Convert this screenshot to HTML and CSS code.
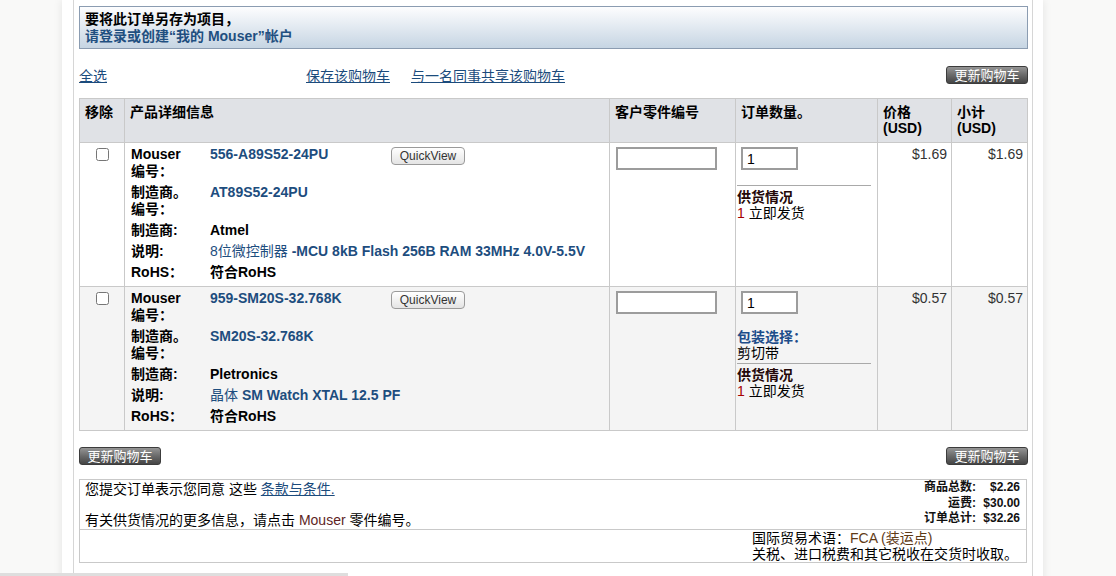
FILE: index.html
```html
<!DOCTYPE html>
<html>

<head>
  <meta charset="utf-8">
  <meta name="viewport" content="width=device-width, initial-scale=1.0">
  <link rel="stylesheet" href="styles.css">
</head>

<body>
  <div class="page">
    <div class="inner">

      <!-- Save as project notice -->
      <div class="notice">
        <div class="notice-title">要将此订单另存为项目，</div>
        <a class="notice-link" href="#">请登录或创建“我的 Mouser”帐户</a>
      </div>

      <div class="toolbar">
        <a class="link" href="#">全选</a>
        <a class="link save-link" href="#">保存该购物车</a>
        <a class="link share-link" href="#">与一名同事共享该购物车</a>
        <button class="btn-update push-right">更新购物车</button>
      </div>

      <!-- Cart table -->
      <table class="cart">
        <colgroup>
          <col class="c-remove">
          <col class="c-details">
          <col class="c-custpn">
          <col class="c-qty">
          <col class="c-price">
          <col class="c-sub">
        </colgroup>
        <thead>
          <tr>
            <th>移除</th>
            <th>产品详细信息</th>
            <th>客户零件编号</th>
            <th>订单数量。</th>
            <th>价格<br>(USD)</th>
            <th>小计<br>(USD)</th>
          </tr>
        </thead>
        <tbody>
          <tr>
            <td class="remove"><input type="checkbox"></td>
            <td>
              <div class="details">
                <div class="drow">
                  <div class="dlabel">Mouser<br>编号：</div>
                  <div class="dvalue"><a class="pn" href="#">556-A89S52-24PU</a><button class="qv">QuickView</button></div>
                </div>
                <div class="drow">
                  <div class="dlabel">制造商。<br>编号：</div>
                  <div class="dvalue"><a class="pn" href="#">AT89S52-24PU</a></div>
                </div>
                <div class="drow">
                  <div class="dlabel">制造商:</div>
                  <div class="dvalue">Atmel</div>
                </div>
                <div class="drow">
                  <div class="dlabel">说明:</div>
                  <div class="dvalue"><a class="desc" href="#"><span class="cjk">8位微控制器</span> -MCU 8kB Flash 256B RAM 33MHz 4.0V-5.5V</a></div>
                </div>
                <div class="drow">
                  <div class="dlabel">RoHS：</div>
                  <div class="dvalue">符合RoHS</div>
                </div>
              </div>
            </td>
            <td class="custpn"><input class="txt txt-cust" type="text"></td>
            <td class="qty">
              <input class="txt txt-qty" type="text" value="1">
              <div class="avail">
                <div class="avail-title">供货情况</div>
                <div><span class="stock">1</span> 立即发货</div>
              </div>
            </td>
            <td class="money">$1.69</td>
            <td class="money">$1.69</td>
          </tr>
          <tr class="alt">
            <td class="remove"><input type="checkbox"></td>
            <td>
              <div class="details">
                <div class="drow">
                  <div class="dlabel">Mouser<br>编号：</div>
                  <div class="dvalue"><a class="pn" href="#">959-SM20S-32.768K</a><button class="qv">QuickView</button></div>
                </div>
                <div class="drow">
                  <div class="dlabel">制造商。<br>编号：</div>
                  <div class="dvalue"><a class="pn" href="#">SM20S-32.768K</a></div>
                </div>
                <div class="drow">
                  <div class="dlabel">制造商:</div>
                  <div class="dvalue">Pletronics</div>
                </div>
                <div class="drow">
                  <div class="dlabel">说明:</div>
                  <div class="dvalue"><a class="desc" href="#"><span class="cjk">晶体</span> SM Watch XTAL 12.5 PF</a></div>
                </div>
                <div class="drow">
                  <div class="dlabel">RoHS：</div>
                  <div class="dvalue">符合RoHS</div>
                </div>
              </div>
            </td>
            <td class="custpn"><input class="txt txt-cust" type="text"></td>
            <td class="qty">
              <input class="txt txt-qty" type="text" value="1">
              <div class="packaging">
                <div class="pack-title">包装选择：</div>
                <div>剪切带</div>
              </div>
              <div class="avail">
                <div class="avail-title">供货情况</div>
                <div><span class="stock">1</span> 立即发货</div>
              </div>
            </td>
            <td class="money">$0.57</td>
            <td class="money">$0.57</td>
          </tr>
        </tbody>
      </table>

      <div class="toolbar bottom-bar">
        <button class="btn-update">更新购物车</button>
        <button class="btn-update push-right">更新购物车</button>
      </div>

      <!-- Summary -->
      <table class="summary">
        <tr>
          <td class="terms">
            您提交订单表示您同意 这些 <a class="link" href="#">条款与条件.</a><br><br>
            有关供货情况的更多信息，请点击 <span class="mouser">Mouser</span> 零件编号。
          </td>
          <td class="totals-cell">
            <div class="totals">
              <span>商品总数:</span><span>$2.26</span>
              <span>运费:</span><span>$30.00</span>
              <span>订单总计:</span><span>$32.26</span>
            </div>
          </td>
        </tr>
        <tr class="incoterm-row">
          <td></td>
          <td class="incoterm">
            国际贸易术语：<span class="fca">FCA (装运点)</span><br>
            关税、进口税费和其它税收在交货时收取。
          </td>
        </tr>
      </table>

    </div>
  </div>

  <div class="hscroll"></div>
</body>

</html>
```

FILE: styles.css
```css
/* Page frame */
body {
  font-family: "Liberation Sans", "Noto Sans CJK SC", sans-serif;
  font-size: 14px;
  margin: 0;
  background-color: #f9f9f8;
  color: #000;
  overflow: hidden;
}

.page {
  width: 981px;
  margin-left: 62px;
  min-height: 600px;
  background-color: #fff;
  box-shadow: 0 0 9px rgba(0, 0, 0, 0.09);
}

.inner {
  margin: 0 10px 0 11px;
  padding: 6px 4px 0 5px;
  min-height: 600px;
  border-left: 1px solid #d6d6d6;
  border-right: 1px solid #d6d6d6;
}

a {
  text-decoration: none;
}

.link {
  color: #1b4b7c;
  text-decoration: underline;
}

/* Notice box */
.notice {
  border: 1px solid #8b9cb1;
  background: linear-gradient(#fdfdfe, #c6d5e3);
  padding: 4px 5px 3px;
  line-height: 17px;
  font-weight: bold;
}

.notice-link {
  color: #1f4f80;
}

/* Toolbars */
.toolbar {
  display: flex;
  align-items: center;
  height: 18px;
  margin: 17px 0 14px;
}

.save-link {
  margin-left: 199px;
}

.share-link {
  margin-left: 21px;
}

.push-right {
  margin-left: auto;
}

.bottom-bar {
  margin: 16px 0 14px;
}

.btn-update {
  width: 82px;
  height: 18px;
  padding: 0;
  border: 1px solid #3c3c3c;
  border-radius: 3px;
  background: linear-gradient(#959595, #6a6a6a 50%, #454545);
  color: #fff;
  font-family: "Noto Sans CJK SC", sans-serif;
  font-size: 13px;
  line-height: 16px;
  cursor: pointer;
}

/* Cart table */
.cart {
  width: 948px;
  border-collapse: collapse;
  table-layout: fixed;
}

.c-remove { width: 45px; }
.c-details { width: 485px; }
.c-custpn { width: 126px; }
.c-qty { width: 142px; }
.c-price { width: 74px; }
.c-sub { width: 76px; }

.cart th,
.cart td {
  border: 1px solid #c9c9c9;
  vertical-align: top;
}

.cart th {
  background-color: #e0e2e6;
  text-align: left;
  font-weight: bold;
  line-height: 16px;
  padding: 5px 5px 6px;
}

.cart td {
  padding: 3px 4px 3px 6px;
  line-height: 17px;
}

.cart tr.alt td {
  background-color: #f4f4f4;
}

.remove {
  text-align: center;
}

.remove input {
  margin: 2px 2px 0 0;
  width: 13px;
  height: 13px;
}

.details {
  margin-top: -2px;
  font-weight: bold;
}

.drow {
  display: flex;
  padding: 2px 0;
}

.dlabel {
  width: 79px;
  flex: none;
}

.pn,
.desc {
  color: #1d4d7e;
}

.pn {
  display: inline-block;
  width: 181px;
}

.cjk {
  font-weight: normal;
}

.qv {
  vertical-align: top;
  margin-top: 1px;
  width: 74px;
  height: 18px;
  padding: 0;
  border: 1px solid #9a9a9a;
  border-radius: 4px;
  background: linear-gradient(#ffffff, #e4e4e4);
  color: #333;
  font-family: "Liberation Sans", sans-serif;
  font-size: 12px;
  font-weight: normal;
}

.custpn {
  padding-left: 5px;
}

.txt {
  display: block;
  height: 23px;
  box-sizing: border-box;
  margin: 1px 0 0 0;
  border: 2px solid #9c9c9c;
  padding: 0 4px;
  font-family: "Liberation Sans", sans-serif;
  font-size: 14px;
  background-color: #fff;
}

.txt-cust {
  width: 101px;
}

.cart td.qty {
  padding-left: 1px;
  padding-right: 5px;
}

.txt-qty {
  width: 57px;
  margin-left: 4px;
  margin-bottom: 15px;
}

.packaging,
.avail {
  line-height: 16px;
}

.packaging {
  margin-bottom: -1px;
}

.pack-title {
  color: #1d4d8a;
  font-weight: bold;
}

.avail {
  width: 134px;
  margin-top: 3px;
  border-top: 1px solid #a9a9a9;
  padding-top: 3px;
}

.avail-title {
  font-weight: bold;
  color: #240808;
}

.stock {
  color: #a50000;
}

.cart td.money {
  text-align: right;
  color: #333;
  padding-right: 4px;
}

/* Summary table */
.summary {
  width: 948px;
  border-collapse: collapse;
  border: 1px solid #c9c9c9;
}

.summary td {
  padding: 0;
  vertical-align: top;
}

.terms {
  padding: 2px 0 0 5px !important;
  line-height: 15.5px;
  height: 46px;
}

.mouser {
  color: #5e1f1f;
}

.totals-cell {
  width: 272px;
  padding-right: 6px !important;
}

.totals {
  display: grid;
  grid-template-columns: 1fr 40px;
  column-gap: 4px;
  justify-items: end;
  font-size: 12px;
  font-weight: bold;
  line-height: 15.5px;
  color: #111;
}

.incoterm-row td {
  border-top: 1px solid #c9c9c9;
}

.incoterm {
  padding: 0 0 0 4px !important;
  line-height: 16px;
  height: 32px;
}

.fca {
  color: #5f3b17;
}

/* Scrollbar strip at the bottom of the window */
.hscroll {
  position: fixed;
  left: 0;
  bottom: 0;
  width: 348px;
  height: 3px;
  background-color: #dedede;
}
```
